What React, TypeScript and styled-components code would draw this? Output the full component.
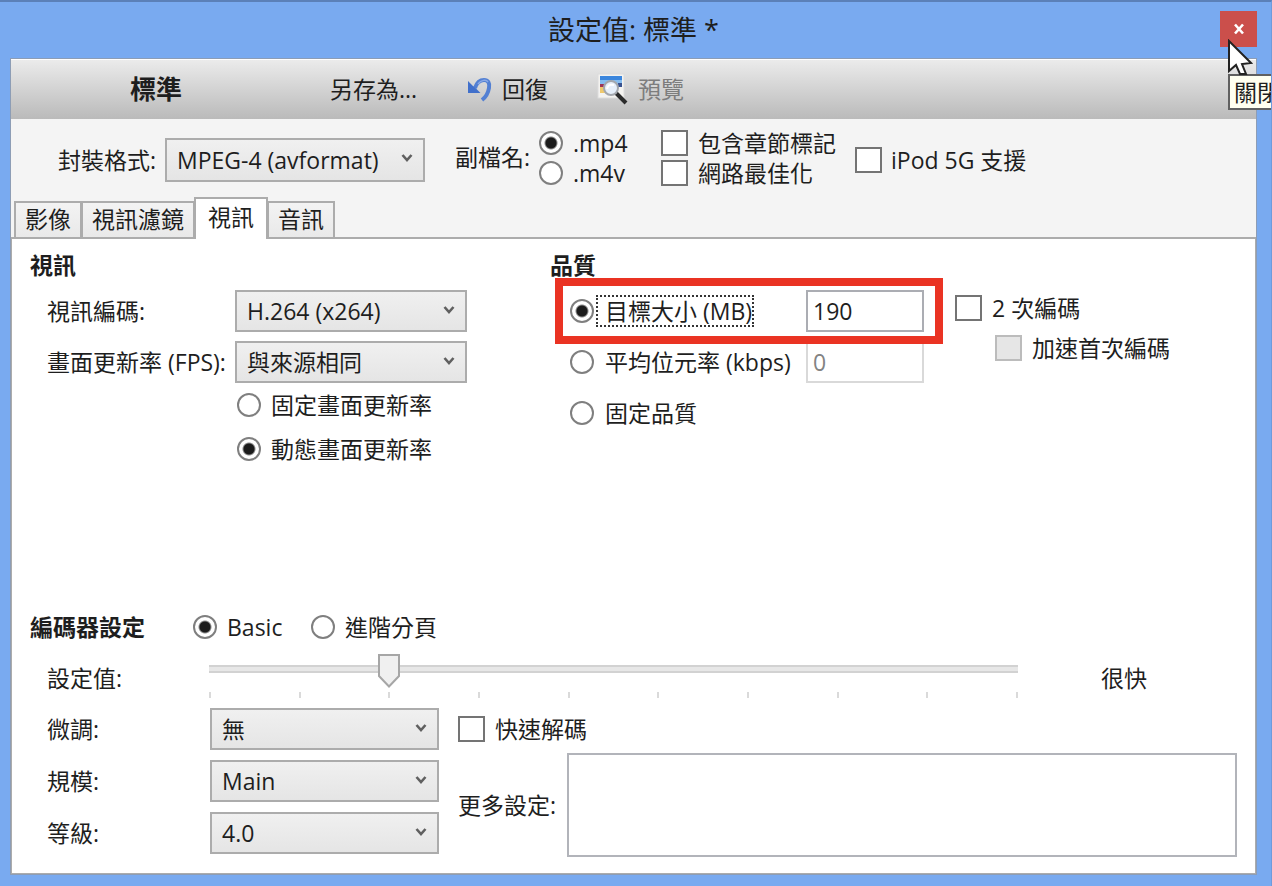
import React from 'react';
import styled, { createGlobalStyle, css } from 'styled-components';

const GlobalStyle = createGlobalStyle`
  *, *::before, *::after { box-sizing: border-box; }
  body { margin: 0; background: #79aaf0; }
  body, button, input, select, textarea {
    font-family: 'Open Sans', 'Noto Sans CJK TC', sans-serif;
    font-size: 23px;
    line-height: 28px;
    color: #1e1e1e;
  }
`;

const Window = styled.div`
  position: relative;
  display: flex;
  flex-direction: column;
  min-height: 100vh;
  padding: 0 14px 11px 10px;
  border-top: 2px solid #5b80b8;
  border-right: 1px solid #6f9bdc;
  background: #79aaf0;
  overflow: hidden;
`;

const TitleBar = styled.header`
  display: grid;
  grid-template-columns: 37px 1fr 37px;
  align-items: center;
  height: 56px;
`;

const Title = styled.h1`
  grid-column: 2;
  margin: 0;
  text-align: center;
  font-size: 27px;
  font-weight: 400;
  line-height: 32px;
`;

const CloseArea = styled.div`
  position: relative;
  width: 37px;
  height: 38px;
`;

const CloseButton = styled.button`
  display: flex;
  align-items: center;
  justify-content: center;
  width: 37px;
  height: 36px;
  padding: 0;
  border: 0;
  background: #cb4f4b;
`;

const Pointer = styled.svg`
  position: absolute;
  left: 7px;
  top: 28px;
  z-index: 3;
`;

const Tooltip = styled.div`
  position: absolute;
  left: 8px;
  top: 63px;
  z-index: 2;
  width: max-content;
  padding: 2px 4px;
  border: 2px solid #606060;
  background: #fffff0;
`;

const Client = styled.main`
  display: flex;
  flex: 1;
  flex-direction: column;
  border: 1px solid #8d9db5;
  background: #f4f4f4;
`;

const Toolbar = styled.div`
  display: flex;
  align-items: center;
  height: 60px;
  padding: 0 0 2px 119px;
  border-top: 1px solid #fff;
  background: linear-gradient(#ebebeb, #bababa);
`;

const PresetName = styled.strong`
  width: 200px;
  font-size: 26px;
`;

const ToolButton = styled.button<{ $width: number }>`
  display: flex;
  align-items: center;
  gap: 9px;
  width: ${(p) => p.$width}px;
  padding: 0;
  border: 0;
  background: none;
  white-space: nowrap;
  &:disabled { color: #7d7d7d; }
`;

const FormatRow = styled.div`
  display: flex;
  align-items: center;
  height: 82px;
  padding-left: 47px;
`;

const FieldLabel = styled.label<{ $width?: number }>`
  width: ${(p) => (p.$width ? `${p.$width}px` : 'auto')};
  white-space: nowrap;
`;

const GroupLabel = styled.span`
  width: 114px;
  padding: 0 0 6px 30px;
  white-space: nowrap;
`;

const Stack = styled.div<{ $width?: number }>`
  display: flex;
  flex-direction: column;
  width: ${(p) => (p.$width ? `${p.$width}px` : 'auto')};
  padding-bottom: 4px;
`;

const Option = styled.label<{ $height?: number; $indent?: number; $gap?: number }>`
  display: flex;
  align-items: center;
  gap: ${(p) => p.$gap ?? 10}px;
  height: ${(p) => p.$height ?? 30}px;
  margin-left: ${(p) => p.$indent ?? 0}px;
  white-space: nowrap;
`;

const Radio = styled.input.attrs({ type: 'radio' })`
  appearance: none;
  flex: none;
  width: 24px;
  height: 24px;
  margin: 0;
  border: 2px solid #7f7f7f;
  border-radius: 50%;
  background: #fff;
  outline: none;
  &:checked { background: radial-gradient(circle, #1c1c1c 5px, #fff 7px); }
`;

const Check = styled.input.attrs({ type: 'checkbox' })`
  appearance: none;
  flex: none;
  width: 27px;
  height: 26px;
  margin: 0;
  border: 2px solid #747474;
  background: #fff;
  &:disabled {
    border-color: #bcbcbc;
    background: #e6e6e6;
  }
`;

const SelectBox = styled.span<{ $width: number; $height?: number }>`
  position: relative;
  display: block;
  width: ${(p) => p.$width}px;
  height: ${(p) => p.$height ?? 42}px;
`;

const NativeSelect = styled.select`
  appearance: none;
  width: 100%;
  height: 100%;
  padding: 0 10px;
  border: 2px solid #acacac;
  border-radius: 0;
  background: linear-gradient(#f0f0f0, #e5e5e5);
`;

const Chevron = styled.svg`
  position: absolute;
  right: 12px;
  top: 14px;
  pointer-events: none;
`;

const Tabs = styled.div`
  display: flex;
  align-items: flex-end;
  height: 36px;
  padding-left: 3px;
`;

const Tab = styled.button<{ $active?: boolean }>`
  height: 36px;
  padding: 0 9px 2px;
  border: 2px solid #acacac;
  border-bottom: 0;
  background: linear-gradient(#f3f3f3, #e9e9e9);
  & + & { margin-left: -1px; }
  ${(p) => p.$active && css`
    position: relative;
    height: 42px;
    margin-bottom: -2px;
    padding: 0 12px 4px;
    background: #fff;
  `}
`;

const Panel = styled.section`
  display: flex;
  flex: 1;
  flex-direction: column;
  border: 2px solid #acacac;
  border-width: 2px 1px 1px;
  background: #fff;
`;

const Upper = styled.div`
  display: grid;
  grid-template-columns: 520px 404px 1fr;
  padding: 12px 18px 0 18px;
`;

const Heading = styled.h2<{ $width?: number }>`
  width: ${(p) => (p.$width ? `${p.$width}px` : 'auto')};
  margin: 0;
  font-size: 23px;
  font-weight: 700;
  line-height: 28px;
`;

const VideoFields = styled.div`
  display: grid;
  grid-template-columns: 188px 232px;
  row-gap: 9px;
  align-items: center;
  padding: 11px 0 0 17px;
`;

const RateOptions = styled.div`
  padding-left: 207px;
`;

const QualityFields = styled.div`
  display: grid;
  row-gap: 9px;
  padding: 11px 0 0 17px;
`;

const QualityRow = styled.div<{ $marked?: boolean }>`
  display: grid;
  grid-template-columns: 236px 118px;
  align-items: center;
  width: 364px;
  height: 42px;
  padding: 0 7px 0 3px;
  ${(p) => p.$marked && css`
    position: relative;
    z-index: 1;
    outline: 8px solid #ea3323;
    outline-offset: 4px;
  `}
`;

const OptionText = styled.span<{ $focused?: boolean }>`
  margin-left: -8px;
  padding-left: 7px;
  border: 2px dotted ${(p) => (p.$focused ? '#333' : 'transparent')};
`;

const TextInput = styled.input`
  width: 118px;
  height: 42px;
  padding: 0 5px;
  border: 2px solid #abadb3;
  background: #fff;
  outline: none;
  &:disabled { border-color: #d9d9d9; color: #838383; }
`;

const PassOptions = styled.div`
  padding: 37px 0 0 1px;
`;

const Encoder = styled.div`
  display: flex;
  flex-direction: column;
  margin-top: auto;
  padding: 0 18px 16px;
`;

const EncoderHead = styled.div`
  display: flex;
  align-items: center;
  height: 42px;
`;

const SpeedRow = styled.div`
  display: flex;
  align-items: center;
  height: 60px;
  padding-left: 17px;
`;

const SliderBox = styled.div`
  flex: 1;
  height: 52px;
  padding-top: 2px;
`;

const Slider = styled.input.attrs({ type: 'range' })`
  appearance: none;
  display: block;
  width: calc(100% + 22px);
  height: 34px;
  margin: 0 -11px;
  background:
    linear-gradient(#d2d2d2 0 2px, #e7e7e7 2px 6px, #d2d2d2 6px 8px)
    center 11px / calc(100% - 22px) 8px no-repeat;
  &::-webkit-slider-thumb {
    appearance: none;
    width: 22px;
    height: 34px;
    border: 0;
    background: url("data:image/svg+xml,%3Csvg xmlns='http://www.w3.org/2000/svg' width='22' height='34'%3E%3Cpath d='M1 1h20v21L11 32.500 1 22z' fill='%23f0f0f0' stroke='%23a6a6a6' stroke-width='2'/%3E%3C/svg%3E") no-repeat;
  }
`;

const Ticks = styled.div`
  display: flex;
  justify-content: space-between;
  padding-top: 4px;
`;

const Tick = styled.i`
  width: 2px;
  height: 6px;
  background: #dadada;
`;

const SpeedValue = styled.output`
  width: 219px;
  padding-left: 83px;
`;

const Lower = styled.div`
  display: grid;
  grid-template-columns: 411px 1fr;
  padding-left: 17px;
`;

const TuneFields = styled.div`
  display: grid;
  grid-template-columns: 163px 229px;
  row-gap: 10px;
  align-content: start;
  align-items: center;
`;

const MoreRow = styled.div`
  display: grid;
  grid-template-columns: 109px 1fr;
  align-items: center;
  margin-top: 3px;
`;

const MoreText = styled.textarea`
  height: 104px;
  border: 2px solid #b2b4ba;
  background: #fff;
  resize: none;
`;

type SelectProps = { id: string; value: string; width: number; height?: number };

function Select({ id, value, width, height }: SelectProps) {
  return (
    <SelectBox $width={width} $height={height}>
      <NativeSelect id={id} defaultValue={value}>
        <option>{value}</option>
      </NativeSelect>
      <Chevron width="12" height="12" viewBox="0 0 12 12" aria-hidden="true">
        <path d="M1.500 3 L6 8 L10.500 3" fill="none" stroke="#606060" strokeWidth="2.600" />
      </Chevron>
    </SelectBox>
  );
}

function UndoIcon() {
  return (
    <svg width="26" height="26" viewBox="0 0 26 26" aria-hidden="true">
      <path d="M8 12C10 6 14 4 17 4C21 4 23 7 22 12C21 18 19 21 15 24" fill="none" stroke="#5380d3" strokeWidth="4" />
      <path d="M11 8C14 4 19 3 21 6" fill="none" stroke="#8aa9e6" strokeWidth="1.500" />
      <path d="M1 5V17H13.500L9 12.500L6 10Z" fill="#4170cb" />
    </svg>
  );
}

function PreviewIcon() {
  return (
    <svg width="32" height="32" viewBox="0 0 32 32" aria-hidden="true">
      <rect x="1" y="1" width="26" height="24" fill="#f4f3f0" stroke="#dcdcdc" />
      <rect x="3" y="3" width="22" height="4" fill="#3b86dd" />
      <rect x="3" y="7" width="22" height="4" fill="#86bdf0" />
      <rect x="3" y="11" width="6" height="3" fill="#9c3558" />
      <rect x="3" y="14" width="5" height="6" fill="#efc96c" />
      <rect x="21" y="10" width="4" height="4" fill="#39528f" />
      <path d="M19 20L29 30" stroke="#2b2b2b" strokeWidth="4" />
      <circle cx="14" cy="15" r="7" fill="#e6effa" stroke="#a3a7ad" strokeWidth="2" />
      <path d="M10 16C11 12 13 11 17 12" fill="none" stroke="#fff" strokeWidth="2" />
    </svg>
  );
}

export default function App() {
  return (
    <>
      <GlobalStyle />
      <Window>
        <TitleBar>
          <Title>設定值: 標準 *</Title>
          <CloseArea>
            <CloseButton aria-label="關閉">
              <svg width="12" height="12" viewBox="0 0 12 12" aria-hidden="true">
                <path d="M2 1.500L10 10.500M10 1.500L2 10.500" stroke="#fff" strokeWidth="2.600" />
              </svg>
            </CloseButton>
            <Tooltip role="tooltip">關閉</Tooltip>
            <Pointer width="26" height="38" viewBox="0 0 26 38" aria-hidden="true">
              <path d="M2 2V32L9 26L13 35L19 35L15 25L24 24Z" fill="#fff" stroke="#222" strokeWidth="2" />
            </Pointer>
          </CloseArea>
        </TitleBar>

        <Client>
          <Toolbar>
            <PresetName>標準</PresetName>
            <ToolButton $width={137}>另存為...</ToolButton>
            <ToolButton $width={130}><UndoIcon />回復</ToolButton>
            <ToolButton $width={100} disabled><PreviewIcon />預覽</ToolButton>
          </Toolbar>

          <FormatRow>
            <FieldLabel htmlFor="container" $width={107}>封裝格式:</FieldLabel>
            <Select id="container" value="MPEG-4 (avformat)" width={260} height={44} />
            <GroupLabel id="extension">副檔名:</GroupLabel>
            <Stack $width={122} role="radiogroup" aria-labelledby="extension">
              <Option><Radio name="ext" defaultChecked />.mp4</Option>
              <Option><Radio name="ext" />.m4v</Option>
            </Stack>
            <Stack $width={194}>
              <Option><Check />包含章節標記</Option>
              <Option><Check />網路最佳化</Option>
            </Stack>
            <Option $gap={9}><Check />iPod 5G 支援</Option>
          </FormatRow>

          <Tabs role="tablist">
            <Tab role="tab">影像</Tab>
            <Tab role="tab">視訊濾鏡</Tab>
            <Tab role="tab" aria-selected $active>視訊</Tab>
            <Tab role="tab">音訊</Tab>
          </Tabs>

          <Panel role="tabpanel">
            <Upper>
              <div>
                <Heading>視訊</Heading>
                <VideoFields>
                  <FieldLabel htmlFor="codec">視訊編碼:</FieldLabel>
                  <Select id="codec" value="H.264 (x264)" width={232} />
                  <FieldLabel htmlFor="fps">畫面更新率 (FPS):</FieldLabel>
                  <Select id="fps" value="與來源相同" width={232} />
                </VideoFields>
                <RateOptions>
                  <Option $height={44}><Radio name="rate" />固定畫面更新率</Option>
                  <Option $height={44}><Radio name="rate" defaultChecked />動態畫面更新率</Option>
                </RateOptions>
              </div>

              <div>
                <Heading>品質</Heading>
                <QualityFields>
                  <QualityRow $marked>
                    <Option><Radio name="quality" defaultChecked /><OptionText $focused>目標大小 (MB)</OptionText></Option>
                    <TextInput aria-label="目標大小 (MB)" defaultValue="190" />
                  </QualityRow>
                  <QualityRow>
                    <Option><Radio name="quality" /><OptionText>平均位元率 (kbps)</OptionText></Option>
                    <TextInput aria-label="平均位元率 (kbps)" defaultValue="0" disabled />
                  </QualityRow>
                  <QualityRow>
                    <Option><Radio name="quality" /><OptionText>固定品質</OptionText></Option>
                  </QualityRow>
                </QualityFields>
              </div>

              <PassOptions>
                <Option $height={40}><Check />2 次編碼</Option>
                <Option $height={40} $indent={40}><Check disabled />加速首次編碼</Option>
              </PassOptions>
            </Upper>

            <Encoder>
              <EncoderHead>
                <Heading $width={163}>編碼器設定</Heading>
                <FieldLabel as="div" $width={118}>
                  <Option><Radio name="mode" defaultChecked />Basic</Option>
                </FieldLabel>
                <Option><Radio name="mode" />進階分頁</Option>
              </EncoderHead>

              <SpeedRow>
                <FieldLabel htmlFor="speed" $width={162}>設定值:</FieldLabel>
                <SliderBox>
                  <Slider id="speed" min={0} max={9} step={1} defaultValue={2} />
                  <Ticks>
                    {Array.from({ length: 10 }, (_, i) => <Tick key={i} />)}
                  </Ticks>
                </SliderBox>
                <SpeedValue htmlFor="speed">很快</SpeedValue>
              </SpeedRow>

              <Lower>
                <TuneFields>
                  <FieldLabel htmlFor="tune">微調:</FieldLabel>
                  <Select id="tune" value="無" width={229} />
                  <FieldLabel htmlFor="profile">規模:</FieldLabel>
                  <Select id="profile" value="Main" width={229} />
                  <FieldLabel htmlFor="level">等級:</FieldLabel>
                  <Select id="level" value="4.0" width={229} />
                </TuneFields>
                <div>
                  <Option $height={42}><Check />快速解碼</Option>
                  <MoreRow>
                    <FieldLabel htmlFor="more">更多設定:</FieldLabel>
                    <MoreText id="more" />
                  </MoreRow>
                </div>
              </Lower>
            </Encoder>
          </Panel>
        </Client>
      </Window>
    </>
  );
}
